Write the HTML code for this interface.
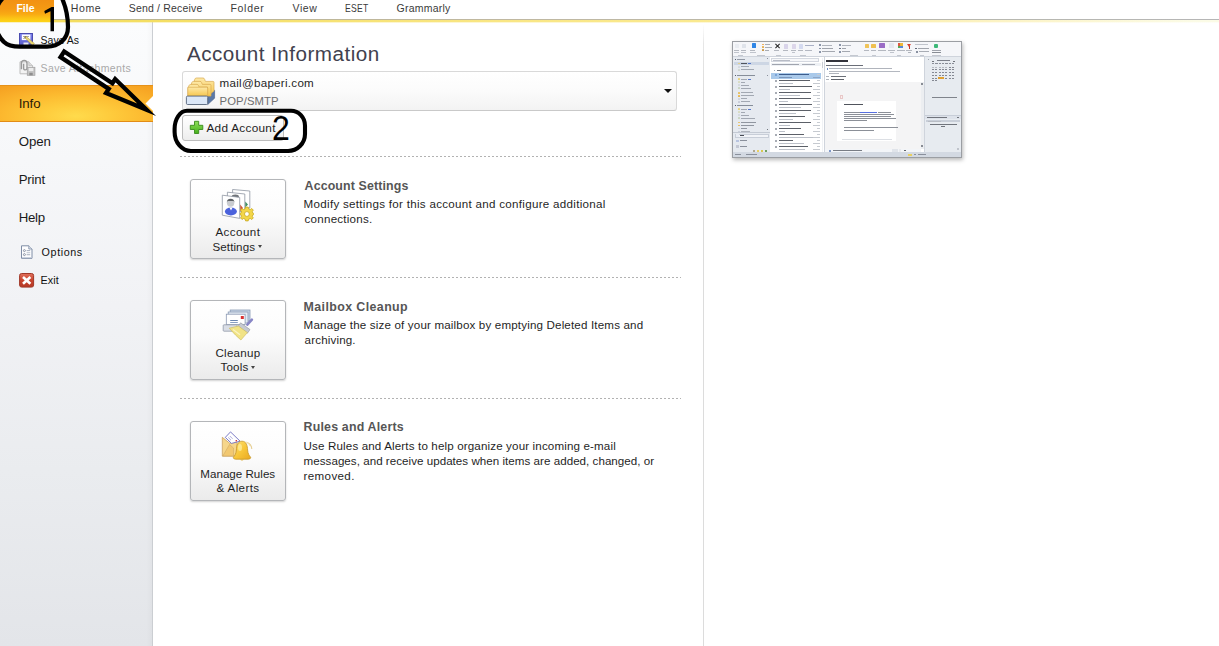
<!DOCTYPE html>
<html>
<head>
<meta charset="utf-8">
<title>Account Information</title>
<style>
html,body{margin:0;padding:0;}
body{width:1219px;height:646px;overflow:hidden;position:relative;background:#fff;font-family:"Liberation Sans",sans-serif;color:#222;}
.abs{position:absolute;}
.t{position:absolute;white-space:nowrap;line-height:normal;font-family:"Liberation Sans",sans-serif;}
#yline{left:0;top:19px;width:1219px;height:1px;background:linear-gradient(90deg,#bbb58c 0%,#c0b8a0 41%,#b8b8b0 82%,#b6b6b6 100%);}
#yl2{left:0;top:20px;width:1219px;height:2px;background:linear-gradient(90deg,#f3dc5e 0%,#f4de62 12%,#f9e684 41%,#fae98f 57%,#fcf3c4 82%,#fbfbe6 98%);}
#yl3{left:0;top:22px;width:1219px;height:1px;opacity:0.35;background:linear-gradient(90deg,#f3dc5e 0%,#f4de62 12%,#f9e684 41%,#fae98f 57%,#fcf3c4 82%,#fbfbe6 98%);}
#filetab{left:0;top:0;width:54px;height:22px;background:linear-gradient(#f29113 0%,#f59a13 40%,#f9ab13 65%,#fcc616 85%,#fdd418 100%);}
#side{left:0;top:22px;width:152px;height:624px;background:linear-gradient(#fbfcfd 0%,#f6f7f9 22%,#f1f2f5 45.5%,#eaecef 71.8%,#e3e5e9 100%);}
#sidehl{left:146px;top:23px;width:6px;height:623px;background:linear-gradient(90deg,rgba(0,0,0,0),rgba(0,0,0,0.025));}
#sideborder{left:152px;top:22px;width:1px;height:624px;background:#cbced2;}
#info{left:0;top:85px;width:153px;height:37px;background:radial-gradient(ellipse 120px 38px at 76px 30px,#ffdb4c 0%,#fecb3c 30%,#fcb92f 60%,#f8a926 85%,#f5a021 100%);border-top:1px solid #e6921a;border-bottom:1px solid #e28c16;box-sizing:border-box;}
#vdiv{left:703px;top:24px;width:1px;height:622px;background:linear-gradient(rgba(220,220,220,0) 0,#e6e6e6 20px,#dcdcdc 70px,#dcdcdc 100%);}
.dash{left:180px;width:501px;height:1px;background:repeating-linear-gradient(90deg,#b2b2b2 0,#b2b2b2 2px,transparent 2px,transparent 4px);}
.bigbtn{left:190px;width:94px;height:78px;border:1px solid #b4b6b9;border-radius:3px;background:linear-gradient(#ffffff 0%,#fcfcfc 45%,#f1f1f1 80%,#ebebeb 100%);box-shadow:0 1px 2px rgba(0,0,0,0.18);}
.darr{width:0;height:0;border-left:2.5px solid transparent;border-right:2.5px solid transparent;border-top:3px solid #444;}
</style>
</head>
<body>
<div class="abs" id="side"></div>
<div class="abs" id="sidehl"></div>
<div class="abs" id="sideborder"></div>
<div class="abs" id="vdiv"></div>
<div class="abs" id="yline"></div>
<div class="abs" id="yl2"></div>
<div class="abs" id="yl3"></div>
<div class="abs" id="filetab"></div>
<div class="abs" id="info"></div>
<svg class="abs" style="left:144px;top:95px;" width="10" height="17" viewBox="0 0 10 17"><path d="M10 0 L1.5 8.5 L10 17 Z" fill="#ffffff"/></svg>

<!-- account dropdown -->
<div class="abs" id="acct" style="left:182px;top:71px;width:493px;height:38px;border:1px solid #d9d9d9;border-bottom-color:#c9c9c9;border-radius:3px;background:linear-gradient(#ffffff 0%,#fbfbfb 50%,#f3f3f3 100%);"></div>
<div class="abs" style="left:664px;top:89px;width:0;height:0;border-left:4px solid transparent;border-right:4px solid transparent;border-top:4px solid #111;"></div>
<!-- add account button -->
<div class="abs" id="addbtn" style="left:182px;top:115px;width:100px;height:24px;border:1px solid #bdbdbd;border-radius:3px;background:linear-gradient(#ffffff,#f7f7f7 50%,#ededed);"></div>

<div class="abs dash" style="top:156px;"></div>
<div class="abs dash" style="top:277px;"></div>
<div class="abs dash" style="top:398px;"></div>

<div class="abs bigbtn" style="top:179px;"></div>
<div class="abs bigbtn" style="top:300px;"></div>
<div class="abs bigbtn" style="top:421px;"></div>
<div class="abs darr" style="left:258px;top:245px;"></div>
<div class="abs darr" style="left:251px;top:366px;"></div>

<svg class="abs" id="icons" style="left:0;top:0;" width="1219" height="646" viewBox="0 0 1219 646">
<defs>
<linearGradient id="gFold" x1="0" y1="0" x2="0" y2="1"><stop offset="0" stop-color="#fde9a8"/><stop offset="1" stop-color="#f6c64e"/></linearGradient>
<linearGradient id="gBell" x1="0" y1="0" x2="1" y2="1"><stop offset="0" stop-color="#fde27a"/><stop offset="0.5" stop-color="#f8c73a"/><stop offset="1" stop-color="#e9a820"/></linearGradient>
<linearGradient id="gRed" x1="0" y1="0" x2="0" y2="1"><stop offset="0" stop-color="#e0705c"/><stop offset="0.5" stop-color="#c8442e"/><stop offset="1" stop-color="#b63a26"/></linearGradient>
<linearGradient id="gGreen" x1="0" y1="0" x2="0" y2="1"><stop offset="0" stop-color="#8fe05a"/><stop offset="1" stop-color="#46b01c"/></linearGradient>
<linearGradient id="gBlue" x1="0" y1="0" x2="0" y2="1"><stop offset="0" stop-color="#7a80ee"/><stop offset="1" stop-color="#5a5cc8"/></linearGradient>
</defs>

<!-- Save As -->
<g>
<rect x="19.5" y="33.5" width="13" height="12.5" fill="url(#gBlue)" stroke="#4a4cb0" stroke-width="1"/>
<rect x="21.8" y="34.5" width="8.6" height="5.6" fill="#ffffff"/>
<rect x="23" y="36" width="6" height="0.9" fill="#9a9aa8"/>
<rect x="23" y="38" width="4" height="0.9" fill="#b4b4c0"/>
<rect x="23.5" y="42.5" width="5" height="3.5" fill="#e8e8f4"/>
<path d="M24.3 37 L26.2 36.4 L34.4 43.6 L32.6 45.4 Z" fill="#ecd978" stroke="#b09a3a" stroke-width="0.6"/>
<path d="M24.3 37 L26.2 36.4 L25.2 37.8 Z" fill="#333"/>
</g>

<!-- Save Attachments (disabled) -->
<g>
<path d="M20 61.8 L28.8 61.8 L32.6 65.6 L32.6 73.8 L20 73.8 Z" fill="#f3f3f3" stroke="#bdbdbd" stroke-width="1"/>
<path d="M28.8 61.8 L28.8 65.6 L32.6 65.6" fill="#dcdcdc" stroke="#bdbdbd" stroke-width="0.8"/>
<path d="M21.4 69.2 L21.4 63.2 A2.8 2.8 0 0 1 27 63.2 L27 68.2 A1.7 1.7 0 0 1 23.6 68.2 L23.6 63.8" fill="none" stroke="#9a9a9a" stroke-width="1.4"/>
<rect x="27.3" y="67.3" width="7.6" height="8" fill="#c4c4c4" stroke="#a4a4a4" stroke-width="0.8"/>
<rect x="28.8" y="68" width="4.5" height="3" fill="#ececec"/>
<rect x="29.3" y="72.8" width="3.4" height="2.5" fill="#8e8e8e"/>
</g>

<!-- Options -->
<g>
<path d="M21.5 245.8 L28.8 245.8 L32 249 L32 258.3 L21.5 258.3 Z" fill="#fdfdfe" stroke="#7f8da6" stroke-width="1"/>
<path d="M28.8 245.8 L28.8 249 L32 249" fill="#dfe5ee" stroke="#7f8da6" stroke-width="0.8"/>
<circle cx="24.4" cy="250.6" r="1" fill="none" stroke="#6a7488" stroke-width="0.7"/>
<circle cx="24.4" cy="254.6" r="1" fill="none" stroke="#6a7488" stroke-width="0.7"/>
<rect x="26.6" y="250.2" width="3.6" height="0.9" fill="#9aa4b6"/>
<rect x="26.6" y="252.3" width="3.6" height="0.9" fill="#b4bcc9"/>
<rect x="26.6" y="254.3" width="3.6" height="0.9" fill="#9aa4b6"/>
<rect x="22" y="257" width="9.5" height="1" fill="#c9d1de"/>
</g>

<!-- Exit -->
<g>
<rect x="19.6" y="273.5" width="14" height="13.6" rx="2" ry="2" fill="url(#gRed)" stroke="#a03828" stroke-width="1"/>
<path d="M23 277 L30.4 283.8 M30.4 277 L23 283.8" stroke="#ffffff" stroke-width="2.6" stroke-linecap="butt"/>
</g>

<!-- Account folder icon -->
<g>
<path d="M207.7 96.1 L214.6 90.2 L214.6 98.2 L207.7 104.6 Z" fill="#5a78a6" stroke="#4a6088" stroke-width="0.6"/>
<path d="M193.5 83.5 L194.8 79.2 Q195.2 78 196.4 78 L203 78 Q204.2 78 204.6 79.2 L205.4 81.4 L213 81.4 Q214 81.4 214 82.4 L214 91 L207.7 96.1 L193.5 96.1 Z" fill="url(#gFold)" stroke="#d9a94e" stroke-width="0.7"/>
<path d="M190.6 86.5 L191.9 82.4 Q192.3 81.4 193.5 81.4 L200 81.4 Q201.2 81.4 201.6 82.6 L202.3 84.4 L210 84.4 Q211 84.4 211 85.4 L211 96.1 L190.6 96.1 Z" fill="url(#gFold)" stroke="#d9a94e" stroke-width="0.7"/>
<path d="M187.9 96.1 L187.9 88.4 L189.2 85.2 Q189.6 84.4 190.6 84.4 L197 84.4 Q198 84.4 198.4 85.4 L199.2 87 L206.7 87 Q207.7 87 207.7 88 L207.7 96.1 Z" fill="url(#gFold)" stroke="#d9a94e" stroke-width="0.7"/>
<rect x="187.9" y="87.2" width="19.8" height="8.9" fill="url(#gFold)" stroke="#d9a94e" stroke-width="0.6"/>
<rect x="186.4" y="96.1" width="21.3" height="8.4" rx="1.2" ry="1.2" fill="#dbe7f7" stroke="#56647a" stroke-width="0.9"/>
</g>

<!-- Plus -->
<g>
<path d="M194.5 121.3 L198.7 121.3 L198.7 125.3 L202.8 125.3 L202.8 129.5 L198.7 129.5 L198.7 133.5 L194.5 133.5 L194.5 129.5 L190.3 129.5 L190.3 125.3 L194.5 125.3 Z" fill="url(#gGreen)" stroke="#3a8a1c" stroke-width="0.9"/>
</g>

<!-- Account settings icon -->
<g>
<path d="M232.6 189.5 L249.8 191 L249.8 208 L232.6 206 Z" fill="#ffffff" stroke="#8e96a2" stroke-width="0.8"/>
<path d="M245.2 201.5 L248 204.5 L245.2 207.5 Z" fill="#3f8f62"/>
<path d="M227.4 192.2 L244.8 194 L244.8 212 L227.4 209.6 Z" fill="#ffffff" stroke="#8e96a2" stroke-width="0.8"/>
<ellipse cx="235.3" cy="196.4" rx="3.6" ry="2" fill="#707478"/>
<path d="M240.2 204.5 L243 208 L240.2 211.5 Z" fill="#d0532e"/>
<path d="M222.3 195.2 L239.7 197.4 L239.7 218.4 L222.3 215.2 Z" fill="#ffffff" stroke="#8e96a2" stroke-width="0.8"/>
<ellipse cx="230.9" cy="211.5" rx="6" ry="3.9" fill="#4a62dc"/>
<path d="M229.4 207.6 L231 210.6 L232.6 207.6 Z" fill="#ffffff"/>
<circle cx="230.6" cy="203" r="3.7" fill="#c9ccd0"/>
<path d="M226.8 202.6 A3.8 3.8 0 0 1 234.4 202.6 L233.6 200.9 L227.6 200.9 Z" fill="#5e6266"/>
<g transform="translate(246.9,214)">
<path d="M-1.3 -6.9 L1.3 -6.9 L1.7 -5.2 L3.4 -4.5 L4.9 -5.5 L6.4 -3.9 L5.4 -2.4 L6 -0.9 L7 0 L6 0.9 L5.4 2.4 L6.4 3.9 L4.9 5.5 L3.4 4.5 L1.7 5.2 L1.3 6.9 L-1.3 6.9 L-1.7 5.2 L-3.4 4.5 L-4.9 5.5 L-6.4 3.9 L-5.4 2.4 L-6 0.9 L-7 0 L-6 -0.9 L-5.4 -2.4 L-6.4 -3.9 L-4.9 -5.5 L-3.4 -4.5 L-1.7 -5.2 Z" fill="#f3d648" stroke="#c7a822" stroke-width="0.8"/>
<circle cx="0" cy="0" r="2.4" fill="#ffffff" stroke="#c7a822" stroke-width="0.8"/>
</g>
</g>

<!-- Cleanup icon -->
<g>
<rect x="230.2" y="310" width="19.8" height="11" fill="#c9d6e6" stroke="#8a9cb6" stroke-width="0.8"/>
<rect x="228.2" y="312" width="19.8" height="11" fill="#e3eaf3" stroke="#8a9cb6" stroke-width="0.8"/>
<rect x="226.3" y="314.2" width="18.8" height="10.4" fill="#ffffff" stroke="#8a98b2" stroke-width="0.8"/>
<rect x="240.8" y="316" width="3" height="3" fill="#d93030"/>
<rect x="230.2" y="320" width="7.6" height="0.9" fill="#5a78a8"/>
<rect x="230.2" y="322" width="7.6" height="0.9" fill="#7a94bc"/>
<rect x="223.2" y="324.8" width="14" height="6.4" rx="0.8" ry="0.8" fill="#dadee6" stroke="#9299a9" stroke-width="0.8"/>
<path d="M251.9 319.6 L247.3 324.6" stroke="#8886c6" stroke-width="2.6" stroke-linecap="round"/>
<path d="M240.6 322.8 L250 329.6 L247.4 333.2 L238 326.4 Z" fill="#c6cad2" stroke="#8e949e" stroke-width="0.6"/>
<path d="M229.2 328.2 L238.4 326 L247.4 332.6 L240.9 340 Q236 336 229.2 328.2 Z" fill="#f1e386" stroke="#c9b85a" stroke-width="0.6"/>
<path d="M233 329.5 L240 334.8" stroke="#fbf4c0" stroke-width="1.4"/>
</g>

<!-- Rules & alerts icon -->
<g>
<path d="M222.3 437.3 L230 443.5 L237 440.5 L237 456.2 L222.3 456.2 Z" fill="#f6d68a" stroke="#c9a262" stroke-width="0.8"/>
<path d="M230.5 431.9 L240.1 441.2 L231.5 443.4 L225.3 437.4 Z" fill="#ffffff" stroke="#5a5ab8" stroke-width="0.8"/>
<path d="M228.2 437.4 L231 440.2 M229.8 436 L232.6 438.8" stroke="#8a8ad0" stroke-width="0.7"/>
<rect x="235.6" y="440" width="1.4" height="1.4" fill="#d83838"/>
<path d="M222.8 456 L229.5 444.5 L233.5 448 L233.5 456 Z" fill="#f2c870" stroke="#c9a262" stroke-width="0.5"/>
<path d="M247 442.5 Q251.5 444 251.8 449" fill="none" stroke="#e6cf94" stroke-width="1.1"/>
<path d="M245.5 441.8 Q249 442.3 250 446" fill="none" stroke="#eedcae" stroke-width="0.9"/>
<path d="M242 441.2 C237.5 441.2 236.6 446 236.4 450 C236.2 453.5 234.8 455.6 233.4 457.2 C233 458.4 234 459 236 459.2 L248 459.2 C250 459 251 458.4 250.6 457.2 C249.2 455.6 247.8 453.5 247.6 450 C247.4 446 246.5 441.2 242 441.2 Z" fill="url(#gBell)" stroke="#c8982a" stroke-width="0.8"/>
<ellipse cx="240" cy="447.5" rx="2" ry="3.6" fill="#fdeea0" opacity="0.75"/>
<path d="M240 459.4 Q242 461.6 244 459.4 Z" fill="#d9a828"/>
</g>
</svg>


<div id="thumb" style="position:absolute;left:732px;top:41px;width:228px;height:115px;border:1px solid #9b9ea3;background:#fff;box-shadow:1px 2px 4px rgba(0,0,0,0.28);overflow:hidden;"><div style="position:absolute;left:0px;top:0px;width:228px;height:14.5px;background:#f5f6f9;"></div><div style="position:absolute;left:0px;top:14.3px;width:228px;height:0.8px;background:#cfd4dc;"></div><div style="position:absolute;left:0px;top:15px;width:37px;height:95px;background:#e6eaf0;"></div><div style="position:absolute;left:36.6px;top:15px;width:0.8px;height:95px;background:#c3c9d3;"></div><div style="position:absolute;left:37.4px;top:15px;width:53.4px;height:95px;background:#ffffff;"></div><div style="position:absolute;left:90.8px;top:15px;width:0.8px;height:95px;background:#cfd4dc;"></div><div style="position:absolute;left:91.6px;top:15px;width:99.6px;height:95px;background:#ffffff;"></div><div style="position:absolute;left:191.2px;top:15px;width:0.8px;height:95px;background:#cfd4dc;"></div><div style="position:absolute;left:192px;top:15px;width:36px;height:95px;background:#e7ebf0;"></div><div style="position:absolute;left:0px;top:110px;width:228px;height:5px;background:#d3d9e2;"></div><div style="position:absolute;left:2px;top:1.5px;width:3.5px;height:4.5px;background:#e9ecf1;border-radius:0.5px;"></div><div style="position:absolute;left:8.5px;top:1.5px;width:4px;height:4.5px;background:#dfe3ea;border-radius:0.5px;"></div><div style="position:absolute;left:18.5px;top:1.2px;width:4.2px;height:5px;background:#2f86e6;border-radius:0.5px;"></div><div style="position:absolute;left:28.5px;top:1.5px;width:2.5px;height:1.6px;background:#f0a848;border-radius:0.5px;"></div><div style="position:absolute;left:28.5px;top:4.2px;width:2.5px;height:1.6px;background:#e8b050;border-radius:0.5px;"></div><div style="position:absolute;left:28.5px;top:7px;width:2.5px;height:1.6px;background:#c89848;border-radius:0.5px;"></div><div style="position:absolute;left:32px;top:2px;width:5px;height:0.9px;background:#a8acb4;"></div><div style="position:absolute;left:32px;top:4.8px;width:6.5px;height:0.9px;background:#a8acb4;"></div><div style="position:absolute;left:32px;top:7.6px;width:3.5px;height:0.9px;background:#a8acb4;"></div><div style="position:absolute;left:44.10000000000002px;top:0.7999999999999972px;width:1.2px;height:6px;background:#222;transform:rotate(45deg);"></div><div style="position:absolute;left:44.10000000000002px;top:0.7999999999999972px;width:1.2px;height:6px;background:#222;transform:rotate(-45deg);"></div><div style="position:absolute;left:51px;top:2px;width:4px;height:4.5px;background:#d9d4ea;border-radius:0.5px;"></div><div style="position:absolute;left:58.5px;top:2px;width:4px;height:4.5px;background:#dcd6ea;border-radius:0.5px;"></div><div style="position:absolute;left:65.5px;top:2px;width:4px;height:4.5px;background:#d4daf0;border-radius:0.5px;"></div><div style="position:absolute;left:72px;top:2.6px;width:9px;height:1px;background:#a9b0c6;"></div><div style="position:absolute;left:72px;top:7.6px;width:7px;height:0.9px;background:#b4b8c2;"></div><div style="position:absolute;left:1.4px;top:7.6px;width:5px;height:0.8px;background:#b4b8c0;"></div><div style="position:absolute;left:7.9px;top:7.6px;width:5px;height:0.8px;background:#b4b8c0;"></div><div style="position:absolute;left:16.9px;top:7.6px;width:5px;height:0.8px;background:#b4b8c0;"></div><div style="position:absolute;left:41.4px;top:7.6px;width:5px;height:0.8px;background:#b4b8c0;"></div><div style="position:absolute;left:50.4px;top:7.6px;width:5px;height:0.8px;background:#b4b8c0;"></div><div style="position:absolute;left:57.9px;top:7.6px;width:5px;height:0.8px;background:#b4b8c0;"></div><div style="position:absolute;left:64.9px;top:7.6px;width:5px;height:0.8px;background:#b4b8c0;"></div><div style="position:absolute;left:1.4px;top:9.6px;width:4.6px;height:0.8px;background:#c0c4cc;"></div><div style="position:absolute;left:8px;top:9.6px;width:4.6px;height:0.8px;background:#c0c4cc;"></div><div style="position:absolute;left:17px;top:9.6px;width:6px;height:0.8px;background:#c0c4cc;"></div><div style="position:absolute;left:58.5px;top:9.6px;width:3px;height:0.8px;background:#c0c4cc;"></div><div style="position:absolute;left:86px;top:2.2px;width:1.5px;height:1.5px;background:#8a94a8;"></div><div style="position:absolute;left:88.5px;top:2.5px;width:10px;height:0.9px;background:#b0b4bc;"></div><div style="position:absolute;left:86px;top:5.6px;width:1.5px;height:1.5px;background:#8a94a8;"></div><div style="position:absolute;left:88.5px;top:5.9px;width:11px;height:0.9px;background:#a0a4ac;"></div><div style="position:absolute;left:86px;top:9px;width:1.5px;height:1.5px;background:#8a94a8;"></div><div style="position:absolute;left:88.5px;top:9.3px;width:13px;height:0.9px;background:#a4a8b0;"></div><div style="position:absolute;left:106px;top:2.2px;width:1.5px;height:1.5px;background:#8a94a8;"></div><div style="position:absolute;left:108.5px;top:2.5px;width:9px;height:0.9px;background:#b0b4bc;"></div><div style="position:absolute;left:106px;top:5.6px;width:1.5px;height:1.5px;background:#707888;"></div><div style="position:absolute;left:108.5px;top:5.9px;width:4px;height:0.9px;background:#a0a4ac;"></div><div style="position:absolute;left:106px;top:9px;width:1.5px;height:1.5px;background:#8a94a8;"></div><div style="position:absolute;left:108.5px;top:9.3px;width:8px;height:0.9px;background:#a4a8b0;"></div><div style="position:absolute;left:131.8px;top:1.5px;width:4.6px;height:4.6px;background:#f0c45a;border-radius:0.5px;"></div><div style="position:absolute;left:138px;top:1.5px;width:4.6px;height:4.6px;background:#efc050;border-radius:0.5px;"></div><div style="position:absolute;left:146.2px;top:1.2px;width:5.4px;height:4.8px;background:#9a6cc6;border-radius:0.5px;"></div><div style="position:absolute;left:156px;top:1.4px;width:5px;height:5px;background:#e4e8f0;border-radius:0.5px;"></div><div style="position:absolute;left:164.5px;top:1.2px;width:2.8px;height:2.6px;background:#e05840;"></div><div style="position:absolute;left:167.3px;top:1.2px;width:2.8px;height:2.6px;background:#f0b838;"></div><div style="position:absolute;left:164.5px;top:3.8px;width:2.8px;height:2.6px;background:#58a858;"></div><div style="position:absolute;left:167.3px;top:3.8px;width:2.8px;height:2.6px;background:#5888d8;"></div><div style="position:absolute;left:174px;top:1.6000000000000014px;width:0;height:0;border-left:2.2px solid transparent;border-right:2.2px solid transparent;border-top:3px solid #d84030;"></div><div style="position:absolute;left:175.8px;top:4.4px;width:0.9px;height:2.2px;background:#c03828;"></div><div style="position:absolute;left:131px;top:8.2px;width:5px;height:0.8px;background:#b4b8c0;"></div><div style="position:absolute;left:138px;top:8.2px;width:4.5px;height:0.8px;background:#b4b8c0;"></div><div style="position:absolute;left:145px;top:8.2px;width:8px;height:0.8px;background:#b4b8c0;"></div><div style="position:absolute;left:155px;top:8.2px;width:7px;height:0.8px;background:#b4b8c0;"></div><div style="position:absolute;left:163.5px;top:8.2px;width:8.5px;height:0.8px;background:#b4b8c0;"></div><div style="position:absolute;left:173px;top:8.2px;width:6px;height:0.8px;background:#b4b8c0;"></div><div style="position:absolute;left:156.5px;top:10.2px;width:4.5px;height:0.8px;background:#c0c4cc;"></div><div style="position:absolute;left:175px;top:10.2px;width:3px;height:0.8px;background:#b0b4bc;"></div><div style="position:absolute;left:182px;top:2.3px;width:13px;height:0.9px;background:#c0c4cc;"></div><div style="position:absolute;left:182px;top:5.6px;width:1.8px;height:1.4px;background:#606878;"></div><div style="position:absolute;left:184.5px;top:5.8px;width:11px;height:0.9px;background:#a0a4ac;"></div><div style="position:absolute;left:183px;top:9.2px;width:1.6px;height:1.4px;background:#8890a0;"></div><div style="position:absolute;left:185.5px;top:9.4px;width:10px;height:0.9px;background:#a8acb4;"></div><div style="position:absolute;left:201.2px;top:1.6px;width:4px;height:4px;background:#3cb878;border-radius:1px;"></div><div style="position:absolute;left:199px;top:7.6px;width:9px;height:0.9px;background:#a0a4ac;"></div><div style="position:absolute;left:199px;top:9.8px;width:9px;height:0.9px;background:#888c94;"></div><div style="position:absolute;left:5px;top:12.6px;width:5px;height:0.7px;background:#c4c8d0;"></div><div style="position:absolute;left:24px;top:12.6px;width:8px;height:0.7px;background:#c4c8d0;"></div><div style="position:absolute;left:43px;top:12.6px;width:5px;height:0.7px;background:#c4c8d0;"></div><div style="position:absolute;left:67px;top:12.6px;width:6px;height:0.7px;background:#c4c8d0;"></div><div style="position:absolute;left:117px;top:12.6px;width:8px;height:0.7px;background:#c4c8d0;"></div><div style="position:absolute;left:139px;top:12.6px;width:4px;height:0.7px;background:#c4c8d0;"></div><div style="position:absolute;left:164px;top:12.6px;width:4px;height:0.7px;background:#c4c8d0;"></div><div style="position:absolute;left:187px;top:12.6px;width:4px;height:0.7px;background:#c4c8d0;"></div><div style="position:absolute;left:199px;top:12.6px;width:9px;height:0.7px;background:#c4c8d0;"></div><div style="position:absolute;left:1px;top:20px;width:35px;height:3.3px;background:#cdd6e4;"></div><div style="position:absolute;left:2px;top:16.6px;width:1px;height:1.2px;background:#586070;"></div><div style="position:absolute;left:4px;top:16.8px;width:8px;height:1px;background:#939aa6;"></div><div style="position:absolute;left:4.8px;top:20.5px;width:2.2px;height:1.9px;background:#e8d27a;border-radius:0.5px;"></div><div style="position:absolute;left:8px;top:21px;width:6px;height:1px;background:#50545c;"></div><div style="position:absolute;left:14.5px;top:21px;width:3px;height:1px;background:#5878c8;"></div><div style="position:absolute;left:4.8px;top:23.7px;width:2.2px;height:1.9px;background:#d4d8de;border-radius:0.5px;"></div><div style="position:absolute;left:8px;top:24.2px;width:8px;height:1px;background:#a2a8b2;"></div><div style="position:absolute;left:4.8px;top:26.9px;width:2.2px;height:1.9px;background:#cfd6d0;border-radius:0.5px;"></div><div style="position:absolute;left:8px;top:27.4px;width:13px;height:1px;background:#a2a8b2;"></div><div style="position:absolute;left:2px;top:33px;width:1px;height:1.2px;background:#586070;"></div><div style="position:absolute;left:4px;top:33.2px;width:18px;height:1px;background:#868e9a;"></div><div style="position:absolute;left:4.8px;top:36.3px;width:2.2px;height:1.9px;background:#e8d27a;border-radius:0.5px;"></div><div style="position:absolute;left:8px;top:36.8px;width:6px;height:1px;background:#a2a8b2;"></div><div style="position:absolute;left:15px;top:36.8px;width:3px;height:1px;background:#5878c8;"></div><div style="position:absolute;left:4.8px;top:39.3px;width:2.2px;height:1.9px;background:#d8dcc0;border-radius:0.5px;"></div><div style="position:absolute;left:8px;top:39.8px;width:4px;height:1px;background:#a2a8b2;"></div><div style="position:absolute;left:4.8px;top:42.3px;width:2.2px;height:1.9px;background:#d4d8de;border-radius:0.5px;"></div><div style="position:absolute;left:8px;top:42.8px;width:8px;height:1px;background:#a2a8b2;"></div><div style="position:absolute;left:4.8px;top:45.3px;width:2.2px;height:1.9px;background:#c8d4c0;border-radius:0.5px;"></div><div style="position:absolute;left:8px;top:45.8px;width:10px;height:1px;background:#a2a8b2;"></div><div style="position:absolute;left:4.8px;top:49.7px;width:2.2px;height:1.9px;background:#e8c060;border-radius:0.5px;"></div><div style="position:absolute;left:8px;top:50.2px;width:12px;height:1px;background:#a2a8b2;"></div><div style="position:absolute;left:4.8px;top:52.7px;width:2.2px;height:1.9px;background:#e8b850;border-radius:0.5px;"></div><div style="position:absolute;left:8px;top:53.2px;width:13px;height:1px;background:#a2a8b2;"></div><div style="position:absolute;left:4.8px;top:55.7px;width:2.2px;height:1.9px;background:#d0d4dc;border-radius:0.5px;"></div><div style="position:absolute;left:8px;top:56.2px;width:6px;height:1px;background:#a2a8b2;"></div><div style="position:absolute;left:4.8px;top:58.7px;width:2.2px;height:1.9px;background:#c8ccd8;border-radius:0.5px;"></div><div style="position:absolute;left:8px;top:59.2px;width:9px;height:1px;background:#a2a8b2;"></div><div style="position:absolute;left:2px;top:63px;width:1px;height:1.2px;background:#586070;"></div><div style="position:absolute;left:4px;top:63.2px;width:16px;height:1px;background:#868e9a;"></div><div style="position:absolute;left:4.8px;top:66.3px;width:2.2px;height:1.9px;background:#e8d27a;border-radius:0.5px;"></div><div style="position:absolute;left:8px;top:66.8px;width:6px;height:1px;background:#a2a8b2;"></div><div style="position:absolute;left:15px;top:66.8px;width:3px;height:1px;background:#5878c8;"></div><div style="position:absolute;left:4.8px;top:69.3px;width:2.2px;height:1.9px;background:#d8dcc0;border-radius:0.5px;"></div><div style="position:absolute;left:8px;top:69.8px;width:4px;height:1px;background:#a2a8b2;"></div><div style="position:absolute;left:4.8px;top:72.3px;width:2.2px;height:1.9px;background:#d4d8de;border-radius:0.5px;"></div><div style="position:absolute;left:8px;top:72.8px;width:8px;height:1px;background:#a2a8b2;"></div><div style="position:absolute;left:4.8px;top:75.3px;width:2.2px;height:1.9px;background:#c8d4c0;border-radius:0.5px;"></div><div style="position:absolute;left:8px;top:75.8px;width:14px;height:1px;background:#a2a8b2;"></div><div style="position:absolute;left:4.8px;top:79.5px;width:2.2px;height:1.9px;background:#e8c060;border-radius:0.5px;"></div><div style="position:absolute;left:8px;top:80px;width:15px;height:1px;background:#9096a0;"></div><div style="position:absolute;left:4.8px;top:82.5px;width:2.2px;height:1.9px;background:#e8b850;border-radius:0.5px;"></div><div style="position:absolute;left:8px;top:83px;width:13px;height:1px;background:#9096a0;"></div><div style="position:absolute;left:4.8px;top:85.5px;width:2.2px;height:1.9px;background:#d0d4dc;border-radius:0.5px;"></div><div style="position:absolute;left:8px;top:86px;width:6px;height:1px;background:#9096a0;"></div><div style="position:absolute;left:4.8px;top:88.5px;width:2.2px;height:1.9px;background:#c8ccd8;border-radius:0.5px;"></div><div style="position:absolute;left:8px;top:89px;width:9px;height:1px;background:#b0b4bc;"></div><div style="position:absolute;left:33.8px;top:16px;width:1.6px;height:1.2px;background:#8a909c;"></div><div style="position:absolute;left:33.8px;top:32.5px;width:1.6px;height:1.2px;background:#8a909c;"></div><div style="position:absolute;left:33.8px;top:87px;width:1.6px;height:1.2px;background:#70767e;"></div><div style="position:absolute;left:0px;top:90.4px;width:36.6px;height:0.7px;background:#c4cad4;"></div><div style="position:absolute;left:1.5px;top:91.6px;width:34px;height:4px;background:#f2f4f8;border:0.5px solid #c8ced8;box-sizing:border-box;"></div><div style="position:absolute;left:3px;top:92.4px;width:2.6px;height:2.4px;background:#e8ecf4;"></div><div style="position:absolute;left:7px;top:93px;width:4px;height:1.1px;background:#484c54;"></div><div style="position:absolute;left:3px;top:97.6px;width:2.8px;height:2.6px;background:#b8c4e0;"></div><div style="position:absolute;left:7.4px;top:98.2px;width:7px;height:1px;background:#8a909c;"></div><div style="position:absolute;left:3px;top:103px;width:2.8px;height:2.6px;background:#c4c8d4;"></div><div style="position:absolute;left:7.4px;top:103.6px;width:7px;height:1px;background:#8a909c;"></div><div style="position:absolute;left:20px;top:108px;width:2px;height:1.6px;background:#b0a890;"></div><div style="position:absolute;left:24px;top:108px;width:2px;height:1.6px;background:#e8d060;"></div><div style="position:absolute;left:28px;top:108px;width:2px;height:1.6px;background:#d8c850;"></div><div style="position:absolute;left:32px;top:108px;width:2px;height:1.6px;background:#70a060;"></div><div style="position:absolute;left:2px;top:112px;width:5.5px;height:0.9px;background:#8a909c;"></div><div style="position:absolute;left:13px;top:112px;width:11px;height:0.9px;background:#8a909c;"></div><div style="position:absolute;left:38px;top:16.4px;width:48px;height:3.4px;background:#f7f8fa;border:0.5px solid #d4d8e0;box-sizing:border-box;"></div><div style="position:absolute;left:39.5px;top:17.6px;width:17px;height:0.8px;background:#b8bcc6;"></div><div style="position:absolute;left:38px;top:21px;width:50px;height:3.2px;background:#eef1f5;"></div><div style="position:absolute;left:39px;top:22.2px;width:27px;height:0.8px;background:#a0a4ae;"></div><div style="position:absolute;left:69px;top:22.2px;width:13px;height:0.8px;background:#a8acb6;"></div><div style="position:absolute;left:88.6px;top:16px;width:1.8px;height:94px;background:#f0f2f5;"></div><div style="position:absolute;left:88.8px;top:20px;width:1.4px;height:6px;background:#c8ccd4;"></div><div style="position:absolute;left:40.5px;top:27.6px;width:1.8px;height:0.8px;background:#a2a8b2;"></div><div style="position:absolute;left:43.5px;top:27.5px;width:4.5px;height:1px;background:#70747c;"></div><div style="position:absolute;left:37.6px;top:30.6px;width:50.6px;height:6px;background:#a9c9ea;"></div><div style="position:absolute;left:42.3px;top:31.9px;width:2px;height:2.2px;background:#7aa4d8;"></div><div style="position:absolute;left:46px;top:32.3px;width:30px;height:1px;background:#3c5c8c;"></div><div style="position:absolute;left:46px;top:35.2px;width:13px;height:0.9px;background:#7a96bc;"></div><div style="position:absolute;left:79.5px;top:35.2px;width:7.5px;height:0.9px;background:#8ea6c6;"></div><div style="position:absolute;left:84px;top:32.3px;width:3px;height:0.7px;background:#c8ccd2;"></div><div style="position:absolute;left:42.3px;top:37.9px;width:2px;height:2.2px;background:#e8eaee;border:0.4px solid #a8acb4;box-sizing:border-box;"></div><div style="position:absolute;left:46px;top:38.3px;width:31px;height:1px;background:#5c6068;"></div><div style="position:absolute;left:46px;top:41.2px;width:14px;height:0.9px;background:#bcc0c8;"></div><div style="position:absolute;left:79.5px;top:41.2px;width:7.5px;height:0.9px;background:#c6cad0;"></div><div style="position:absolute;left:84px;top:38.3px;width:3px;height:0.7px;background:#c8ccd2;"></div><div style="position:absolute;left:42.3px;top:43.9px;width:2px;height:2.2px;background:#e8eaee;border:0.4px solid #a8acb4;box-sizing:border-box;"></div><div style="position:absolute;left:46px;top:44.3px;width:33px;height:1px;background:#5c6068;"></div><div style="position:absolute;left:46px;top:47.2px;width:11px;height:0.9px;background:#bcc0c8;"></div><div style="position:absolute;left:79.5px;top:47.2px;width:7.5px;height:0.9px;background:#c6cad0;"></div><div style="position:absolute;left:84px;top:44.3px;width:3px;height:0.7px;background:#c8ccd2;"></div><div style="position:absolute;left:42.3px;top:49.9px;width:2px;height:2.2px;background:#e8eaee;border:0.4px solid #a8acb4;box-sizing:border-box;"></div><div style="position:absolute;left:46px;top:50.3px;width:32px;height:1px;background:#5c6068;"></div><div style="position:absolute;left:46px;top:53.2px;width:21px;height:0.9px;background:#bcc0c8;"></div><div style="position:absolute;left:79.5px;top:53.2px;width:7.5px;height:0.9px;background:#c6cad0;"></div><div style="position:absolute;left:84px;top:50.3px;width:3px;height:0.7px;background:#c8ccd2;"></div><div style="position:absolute;left:42.3px;top:55.9px;width:2px;height:2.2px;background:#e8eaee;border:0.4px solid #a8acb4;box-sizing:border-box;"></div><div style="position:absolute;left:46px;top:56.3px;width:32px;height:1px;background:#5c6068;"></div><div style="position:absolute;left:46px;top:59.2px;width:9px;height:0.9px;background:#bcc0c8;"></div><div style="position:absolute;left:79.5px;top:59.2px;width:7.5px;height:0.9px;background:#c6cad0;"></div><div style="position:absolute;left:84px;top:56.3px;width:3px;height:0.7px;background:#c8ccd2;"></div><div style="position:absolute;left:42.3px;top:61.9px;width:2px;height:2.2px;background:#f0d878;border:0.4px solid #a8acb4;box-sizing:border-box;"></div><div style="position:absolute;left:46px;top:62.3px;width:33px;height:1px;background:#5c6068;"></div><div style="position:absolute;left:46px;top:65.2px;width:22px;height:0.9px;background:#bcc0c8;"></div><div style="position:absolute;left:79.5px;top:65.2px;width:7.5px;height:0.9px;background:#c6cad0;"></div><div style="position:absolute;left:84px;top:62.3px;width:3px;height:0.7px;background:#c8ccd2;"></div><div style="position:absolute;left:42.3px;top:67.9px;width:2px;height:2.2px;background:#e8eaee;border:0.4px solid #a8acb4;box-sizing:border-box;"></div><div style="position:absolute;left:46px;top:68.3px;width:32px;height:1px;background:#5c6068;"></div><div style="position:absolute;left:46px;top:71.2px;width:17px;height:0.9px;background:#bcc0c8;"></div><div style="position:absolute;left:79.5px;top:71.2px;width:7.5px;height:0.9px;background:#c6cad0;"></div><div style="position:absolute;left:84px;top:68.3px;width:3px;height:0.7px;background:#c8ccd2;"></div><div style="position:absolute;left:42.3px;top:73.9px;width:2px;height:2.2px;background:#e8eaee;border:0.4px solid #a8acb4;box-sizing:border-box;"></div><div style="position:absolute;left:46px;top:74.3px;width:26px;height:1px;background:#5c6068;"></div><div style="position:absolute;left:46px;top:77.2px;width:14px;height:0.9px;background:#bcc0c8;"></div><div style="position:absolute;left:79.5px;top:77.2px;width:7.5px;height:0.9px;background:#c6cad0;"></div><div style="position:absolute;left:84px;top:74.3px;width:3px;height:0.7px;background:#c8ccd2;"></div><div style="position:absolute;left:42.3px;top:79.9px;width:2px;height:2.2px;background:#e8eaee;border:0.4px solid #a8acb4;box-sizing:border-box;"></div><div style="position:absolute;left:46px;top:80.3px;width:32px;height:1px;background:#5c6068;"></div><div style="position:absolute;left:46px;top:83.2px;width:11px;height:0.9px;background:#bcc0c8;"></div><div style="position:absolute;left:79.5px;top:83.2px;width:7.5px;height:0.9px;background:#c6cad0;"></div><div style="position:absolute;left:84px;top:80.3px;width:3px;height:0.7px;background:#c8ccd2;"></div><div style="position:absolute;left:42.3px;top:85.9px;width:2px;height:2.2px;background:#e8eaee;border:0.4px solid #a8acb4;box-sizing:border-box;"></div><div style="position:absolute;left:46px;top:86.3px;width:22px;height:1px;background:#5c6068;"></div><div style="position:absolute;left:46px;top:89.2px;width:6px;height:0.9px;background:#bcc0c8;"></div><div style="position:absolute;left:79.5px;top:89.2px;width:7.5px;height:0.9px;background:#c6cad0;"></div><div style="position:absolute;left:84px;top:86.3px;width:3px;height:0.7px;background:#c8ccd2;"></div><div style="position:absolute;left:42.3px;top:91.9px;width:2px;height:2.2px;background:#e8eaee;border:0.4px solid #a8acb4;box-sizing:border-box;"></div><div style="position:absolute;left:46px;top:92.3px;width:25px;height:1px;background:#5c6068;"></div><div style="position:absolute;left:46px;top:95.2px;width:40px;height:0.9px;background:#bcc0c8;"></div><div style="position:absolute;left:79.5px;top:95.2px;width:7.5px;height:0.9px;background:#c6cad0;"></div><div style="position:absolute;left:84px;top:92.3px;width:3px;height:0.7px;background:#c8ccd2;"></div><div style="position:absolute;left:42.3px;top:97.9px;width:2px;height:2.2px;background:#e8eaee;border:0.4px solid #a8acb4;box-sizing:border-box;"></div><div style="position:absolute;left:46px;top:98.3px;width:14px;height:1px;background:#5c6068;"></div><div style="position:absolute;left:46px;top:101.2px;width:25px;height:0.9px;background:#bcc0c8;"></div><div style="position:absolute;left:79.5px;top:101.2px;width:7.5px;height:0.9px;background:#c6cad0;"></div><div style="position:absolute;left:84px;top:98.3px;width:3px;height:0.7px;background:#c8ccd2;"></div><div style="position:absolute;left:42.3px;top:103.9px;width:2px;height:2.2px;background:#e8eaee;border:0.4px solid #a8acb4;box-sizing:border-box;"></div><div style="position:absolute;left:46px;top:104.3px;width:29px;height:1px;background:#5c6068;"></div><div style="position:absolute;left:46px;top:107.2px;width:26px;height:0.9px;background:#bcc0c8;"></div><div style="position:absolute;left:79.5px;top:107.2px;width:7.5px;height:0.9px;background:#c6cad0;"></div><div style="position:absolute;left:84px;top:104.3px;width:3px;height:0.7px;background:#c8ccd2;"></div><div style="position:absolute;left:93px;top:18.4px;width:22px;height:1.3px;background:#34343c;"></div><div style="position:absolute;left:93px;top:22.8px;width:37px;height:1px;background:#6a6e78;"></div><div style="position:absolute;left:93.5px;top:26.4px;width:1.4px;height:1.2px;background:#6a88c0;"></div><div style="position:absolute;left:96px;top:26.4px;width:63px;height:0.8px;background:#b0b4bc;"></div><div style="position:absolute;left:96px;top:28.6px;width:71px;height:0.8px;background:#b4b8c0;"></div><div style="position:absolute;left:96px;top:30.8px;width:10px;height:0.8px;background:#b0b4bc;"></div><div style="position:absolute;left:93px;top:33.8px;width:2.5px;height:0.7px;background:#b0b4bc;"></div><div style="position:absolute;left:98px;top:33.6px;width:15px;height:0.9px;background:#6c7078;"></div><div style="position:absolute;left:93px;top:36.7px;width:2.5px;height:0.7px;background:#b0b4bc;"></div><div style="position:absolute;left:98px;top:36.5px;width:13px;height:0.9px;background:#60646c;"></div><div style="position:absolute;left:92px;top:39.6px;width:99px;height:0.6px;background:#e0e3e8;"></div><div style="position:absolute;left:92.4px;top:40.2px;width:95.6px;height:66.6px;background:#f4f4f5;"></div><div style="position:absolute;left:188px;top:40.2px;width:2.6px;height:66.6px;background:#eceef1;"></div><div style="position:absolute;left:188.4px;top:41px;width:1.6px;height:1.6px;background:#888c94;"></div><div style="position:absolute;left:188.4px;top:103px;width:1.6px;height:1.6px;background:#888c94;"></div><div style="position:absolute;left:103.6px;top:59px;width:59px;height:40px;background:#ffffff;"></div><div style="position:absolute;left:106.5px;top:52.5px;width:3.4px;height:4px;background:#fbeeee;border:0.4px solid #e8c8c8;box-sizing:border-box;"></div><div style="position:absolute;left:110.6px;top:61.6px;width:19px;height:1.5px;background:#50545c;"></div><div style="position:absolute;left:110.6px;top:69.6px;width:16px;height:0.9px;background:#8c9098;"></div><div style="position:absolute;left:127px;top:69.6px;width:17px;height:0.9px;background:#5870e0;"></div><div style="position:absolute;left:144.6px;top:69.6px;width:13px;height:0.9px;background:#8c9098;"></div><div style="position:absolute;left:110.6px;top:71.8px;width:50px;height:0.9px;background:#8c9098;"></div><div style="position:absolute;left:110.6px;top:74px;width:47px;height:0.9px;background:#8c9098;"></div><div style="position:absolute;left:110.6px;top:76.2px;width:52px;height:0.9px;background:#8c9098;"></div><div style="position:absolute;left:110.6px;top:78.4px;width:23px;height:0.9px;background:#8c9098;"></div><div style="position:absolute;left:110.6px;top:85.4px;width:54px;height:0.9px;background:#8c9098;"></div><div style="position:absolute;left:110.6px;top:87.6px;width:30px;height:0.9px;background:#8c9098;"></div><div style="position:absolute;left:109px;top:96.8px;width:50px;height:0.6px;background:#dcdfe4;"></div><div style="position:absolute;left:92px;top:107px;width:96px;height:3px;background:#f3f5f8;"></div><div style="position:absolute;left:95.5px;top:107.6px;width:2.6px;height:2.2px;background:#5a78b8;border-radius:1.2px;"></div><div style="position:absolute;left:100px;top:108.2px;width:29px;height:0.9px;background:#787c84;"></div><div style="position:absolute;left:159px;top:107.3px;width:5.5px;height:2.4px;background:#e0e4ea;"></div><div style="position:absolute;left:166px;top:107.3px;width:2.4px;height:2.4px;background:#e8eaee;"></div><div style="position:absolute;left:171px;top:108.2px;width:1.6px;height:0.9px;background:#60646c;"></div><div style="position:absolute;left:194.5px;top:16.6px;width:1.4px;height:1.1px;background:#a0a6b0;"></div><div style="position:absolute;left:199px;top:18.6px;width:2px;height:0.9px;background:#70747c;"></div><div style="position:absolute;left:204px;top:18.4px;width:13px;height:1px;background:#7c808a;"></div><div style="position:absolute;left:220.4px;top:18.6px;width:2px;height:0.9px;background:#70747c;"></div><div style="position:absolute;left:199.0px;top:21.4px;width:2.4px;height:0.9px;background:#8a8e98;"></div><div style="position:absolute;left:202.3px;top:21.4px;width:2.4px;height:0.9px;background:#8a8e98;"></div><div style="position:absolute;left:205.6px;top:21.4px;width:2.4px;height:0.9px;background:#8a8e98;"></div><div style="position:absolute;left:208.9px;top:21.4px;width:2.4px;height:0.9px;background:#8a8e98;"></div><div style="position:absolute;left:212.2px;top:21.4px;width:2.4px;height:0.9px;background:#8a8e98;"></div><div style="position:absolute;left:215.5px;top:21.4px;width:2.4px;height:0.9px;background:#8a8e98;"></div><div style="position:absolute;left:218.8px;top:21.4px;width:2.4px;height:0.9px;background:#8a8e98;"></div><div style="position:absolute;left:199.0px;top:24.6px;width:2.2px;height:1px;background:#b4b8c0;"></div><div style="position:absolute;left:202.3px;top:24.6px;width:2.2px;height:1px;background:#b4b8c0;"></div><div style="position:absolute;left:205.6px;top:24.6px;width:2.2px;height:1px;background:#b4b8c0;"></div><div style="position:absolute;left:208.9px;top:24.6px;width:2.2px;height:1px;background:#b4b8c0;"></div><div style="position:absolute;left:212.2px;top:24.6px;width:2.2px;height:1px;background:#b4b8c0;"></div><div style="position:absolute;left:215.5px;top:24.6px;width:2.2px;height:1px;background:#858993;"></div><div style="position:absolute;left:218.8px;top:24.6px;width:2.2px;height:1px;background:#858993;"></div><div style="position:absolute;left:199.0px;top:27.35px;width:2.2px;height:1px;background:#858993;"></div><div style="position:absolute;left:202.3px;top:27.35px;width:2.2px;height:1px;background:#858993;"></div><div style="position:absolute;left:205.6px;top:27.35px;width:2.2px;height:1px;background:#858993;"></div><div style="position:absolute;left:208.9px;top:27.35px;width:2.2px;height:1px;background:#858993;"></div><div style="position:absolute;left:212.2px;top:27.35px;width:2.2px;height:1px;background:#858993;"></div><div style="position:absolute;left:215.5px;top:27.35px;width:2.2px;height:1px;background:#858993;"></div><div style="position:absolute;left:218.8px;top:27.35px;width:2.2px;height:1px;background:#858993;"></div><div style="position:absolute;left:199.0px;top:30.1px;width:2.2px;height:1px;background:#858993;"></div><div style="position:absolute;left:202.3px;top:30.1px;width:2.2px;height:1px;background:#858993;"></div><div style="position:absolute;left:205.6px;top:30.1px;width:2.2px;height:1px;background:#858993;"></div><div style="position:absolute;left:208.9px;top:30.1px;width:2.2px;height:1px;background:#858993;"></div><div style="position:absolute;left:212.2px;top:30.1px;width:2.2px;height:1px;background:#858993;"></div><div style="position:absolute;left:215.5px;top:30.1px;width:2.2px;height:1px;background:#858993;"></div><div style="position:absolute;left:218.8px;top:30.1px;width:2.2px;height:1px;background:#858993;"></div><div style="position:absolute;left:199.0px;top:32.85px;width:2.2px;height:1px;background:#858993;"></div><div style="position:absolute;left:202.3px;top:32.85px;width:2.2px;height:1px;background:#858993;"></div><div style="position:absolute;left:205.6px;top:32.85px;width:2.2px;height:1px;background:#858993;"></div><div style="position:absolute;left:208.9px;top:32.85px;width:2.2px;height:1px;background:#858993;"></div><div style="position:absolute;left:212.2px;top:32.85px;width:2.2px;height:1px;background:#858993;"></div><div style="position:absolute;left:215.5px;top:32.85px;width:2.2px;height:1px;background:#858993;"></div><div style="position:absolute;left:218.8px;top:32.85px;width:2.2px;height:1px;background:#858993;"></div><div style="position:absolute;left:199.0px;top:35.6px;width:2.2px;height:1px;background:#858993;"></div><div style="position:absolute;left:202.3px;top:35.6px;width:2.2px;height:1px;background:#858993;"></div><div style="position:absolute;left:205.6px;top:35.6px;width:2.2px;height:1px;background:#858993;"></div><div style="position:absolute;left:208.9px;top:35.6px;width:2.2px;height:1px;background:#858993;"></div><div style="position:absolute;left:212.2px;top:35.6px;width:2.2px;height:1px;background:#858993;"></div><div style="position:absolute;left:215.5px;top:35.6px;width:2.2px;height:1px;background:#858993;"></div><div style="position:absolute;left:218.8px;top:35.6px;width:2.2px;height:1px;background:#858993;"></div><div style="position:absolute;left:199.0px;top:38.35px;width:2.2px;height:1px;background:#858993;"></div><div style="position:absolute;left:202.3px;top:38.35px;width:2.2px;height:1px;background:#858993;"></div><div style="position:absolute;left:204.8px;top:34.9px;width:6.4px;height:2.2px;background:transparent;border:0.5px solid #e0a030;box-sizing:border-box;"></div><div style="position:absolute;left:198.5px;top:55.4px;width:25px;height:0.9px;background:#80848c;"></div><div style="position:absolute;left:192px;top:73.4px;width:36px;height:0.6px;background:#c8ced8;"></div><div style="position:absolute;left:192px;top:74px;width:36px;height:2.6px;background:#dde2ea;"></div><div style="position:absolute;left:193.5px;top:74.8px;width:20px;height:0.9px;background:#70747c;"></div><div style="position:absolute;left:224.4px;top:74.8px;width:1.6px;height:0.9px;background:#70747c;"></div><div style="position:absolute;left:193px;top:77.6px;width:34px;height:2.6px;background:#ffffff;border:0.4px solid #c8ced8;box-sizing:border-box;"></div><div style="position:absolute;left:194.5px;top:78.6px;width:13px;height:0.8px;background:#b8bcc4;"></div><div style="position:absolute;left:197px;top:81.8px;width:27px;height:0.9px;background:#70747c;"></div><div style="position:absolute;left:208px;top:84px;width:4px;height:0.9px;background:#70747c;"></div><div style="position:absolute;left:224px;top:106px;width:1.6px;height:1.6px;background:#c0c4cc;"></div><div style="position:absolute;left:175px;top:112px;width:4px;height:1.6px;background:#e8d060;"></div><div style="position:absolute;left:180.5px;top:112.2px;width:2px;height:1px;background:#8a909c;"></div><div style="position:absolute;left:184.5px;top:112.2px;width:8px;height:1px;background:#8a909c;"></div></div>

<div class="t" id="t_file" style="left:16.4px;top:2.0px;font-size:10.5px;font-weight:bold;color:#ffffff;">File</div>
<div class="t" id="t_home" style="left:70.8px;top:1.8px;font-size:10.5px;letter-spacing:0.6px;color:#3a3a3a;">Home</div>
<div class="t" id="t_sr" style="left:128.7px;top:1.8px;font-size:10.5px;letter-spacing:0.19px;color:#3a3a3a;">Send / Receive</div>
<div class="t" id="t_folder" style="left:230.4px;top:1.8px;font-size:10.5px;letter-spacing:0.72px;color:#3a3a3a;">Folder</div>
<div class="t" id="t_view" style="left:292.5px;top:1.8px;font-size:10.5px;letter-spacing:0.6px;color:#3a3a3a;">View</div>
<div class="t" id="t_eset" style="left:344.8px;top:1.8px;font-size:10.5px;transform:scaleX(0.82);transform-origin:0 0;letter-spacing:0.3px;color:#3a3a3a;">ESET</div>
<div class="t" id="t_gram" style="left:396.6px;top:1.8px;font-size:10.5px;letter-spacing:0.22px;color:#3a3a3a;">Grammarly</div>
<div class="t" id="s_saveas" style="left:40.6px;top:33.8px;font-size:10.5px;color:#111111;">Save As</div>
<div class="t" id="s_saveatt" style="left:40.6px;top:61.7px;font-size:10.5px;letter-spacing:0.37px;color:#a9a9a9;">Save Attachments</div>
<div class="t" id="s_info" style="left:18.7px;top:95.9px;font-size:13.25px;letter-spacing:-0.06px;color:#2a1a05;">Info</div>
<div class="t" id="s_open" style="left:18.7px;top:134.0px;font-size:13.25px;letter-spacing:-0.06px;color:#1a1a1a;">Open</div>
<div class="t" id="s_print" style="left:18.7px;top:171.9px;font-size:13.25px;letter-spacing:-0.21px;color:#1a1a1a;">Print</div>
<div class="t" id="s_help" style="left:18.7px;top:210.2px;font-size:13.25px;letter-spacing:-0.26px;color:#1a1a1a;">Help</div>
<div class="t" id="s_options" style="left:41.6px;top:245.7px;font-size:10.75px;letter-spacing:0.6px;color:#111111;">Options</div>
<div class="t" id="s_exit" style="left:40.6px;top:273.8px;font-size:10.75px;letter-spacing:0.06px;color:#111111;">Exit</div>
<div class="t" id="m_title" style="left:187.2px;top:42.9px;font-size:19.5px;transform:scaleX(1.06);transform-origin:0 0;letter-spacing:0.44px;color:#41414e;">Account Information</div>
<div class="t" id="m_mail" style="left:219.6px;top:75.9px;font-size:11.6px;letter-spacing:0.27px;color:#1f1f1f;">mail@baperi.com</div>
<div class="t" id="m_pop" style="left:219.6px;top:94.6px;font-size:11.3px;letter-spacing:0.08px;color:#6e6e6e;">POP/SMTP</div>
<div class="t" id="m_add" style="left:206.4px;top:120.8px;font-size:11.8px;letter-spacing:0.28px;color:#1f1f1f;">Add Account</div>
<div class="t" id="b_acc" style="left:215.4px;top:225.0px;font-size:11.6px;letter-spacing:0.43px;color:#1f1f1f;">Account</div>
<div class="t" id="b_set" style="left:212.5px;top:239.7px;font-size:11.6px;letter-spacing:0.08px;color:#1f1f1f;">Settings</div>
<div class="t" id="b_clean" style="left:215.4px;top:346.0px;font-size:11.6px;letter-spacing:0.27px;color:#1f1f1f;">Cleanup</div>
<div class="t" id="b_tools" style="left:220.4px;top:360.3px;font-size:11.6px;letter-spacing:0.24px;color:#1f1f1f;">Tools</div>
<div class="t" id="b_manage" style="left:200.3px;top:467.3px;font-size:11.6px;letter-spacing:0.01px;color:#1f1f1f;">Manage Rules</div>
<div class="t" id="b_alerts" style="left:216.4px;top:481.3px;font-size:11.6px;letter-spacing:0.4px;color:#1f1f1f;">&amp; Alerts</div>
<div class="t" id="h_1" style="left:304.6px;top:178.7px;font-size:12.4px;font-weight:bold;letter-spacing:0.12px;color:#565656;">Account Settings</div>
<div class="t" id="h_2" style="left:303.6px;top:299.7px;font-size:12.4px;font-weight:bold;letter-spacing:0.4px;color:#565656;">Mailbox Cleanup</div>
<div class="t" id="h_3" style="left:303.6px;top:420.3px;font-size:12.4px;font-weight:bold;letter-spacing:0.18px;color:#565656;">Rules and Alerts</div>
<div class="t" id="p_1a" style="left:303.6px;top:197.0px;font-size:11.6px;letter-spacing:0.29px;color:#1f1f1f;">Modify settings for this account and configure additional</div>
<div class="t" id="p_1b" style="left:304.6px;top:211.8px;font-size:11.6px;letter-spacing:0.23px;color:#1f1f1f;">connections.</div>
<div class="t" id="p_2a" style="left:303.6px;top:318.0px;font-size:11.6px;letter-spacing:0.16px;color:#1f1f1f;">Manage the size of your mailbox by emptying Deleted Items and</div>
<div class="t" id="p_2b" style="left:304.6px;top:332.6px;font-size:11.6px;letter-spacing:0.15px;color:#1f1f1f;">archiving.</div>
<div class="t" id="p_3a" style="left:303.6px;top:439.0px;font-size:11.6px;letter-spacing:0.14px;color:#1f1f1f;">Use Rules and Alerts to help organize your incoming e-mail</div>
<div class="t" id="p_3b" style="left:303.6px;top:453.7px;font-size:11.6px;letter-spacing:0.03px;color:#1f1f1f;">messages, and receive updates when items are added, changed, or</div>
<div class="t" id="p_3c" style="left:303.6px;top:468.5px;font-size:11.6px;letter-spacing:0.35px;color:#1f1f1f;">removed.</div>
<div class="t" id="n_2" style="left:272.2px;top:108.8px;font-size:34.5px;transform:scaleX(0.93);transform-origin:0 0;color:#000000;">2</div>

<svg class="abs" id="anno" style="left:0;top:0;" width="1219" height="646" viewBox="0 0 1219 646">
  <path d="M 3 -2 C -3 4, -5 12, -5 20 C -5 30, 0 38, 4 42 C 8 46, 14 46.6, 20 46.6 L 47 46.6 C 59 46.6, 68 39, 68 27 C 68 17, 66 7, 61.5 -3" fill="none" stroke="#000" stroke-width="4.2"/>
  <path d="M 187 110.7 L 291 110.7 A 14 15 0 0 1 305 125.7 L 305 134 A 17 17 0 0 1 288 151 L 191 151 A 16.4 19 0 0 1 174.6 132 L 174.6 129 A 12.4 18.3 0 0 1 187 110.7 Z" fill="none" stroke="#000" stroke-width="4.1"/>
  <polygon points="64.21,51.55 112.44,83.23 115.17,79.07 146.58,109.66 106.03,92.98 108.76,88.83 60.53,57.15" fill="none" stroke="#000" stroke-width="4.3" stroke-linejoin="miter" stroke-miterlimit="8"/>
  <path d="M50.5 31.3 L50.5 11.3 L45 13.8 L44.3 11 L51.6 7 L54 7 L54 31.3 Z" fill="#000"/>
</svg>
</body>
</html>
